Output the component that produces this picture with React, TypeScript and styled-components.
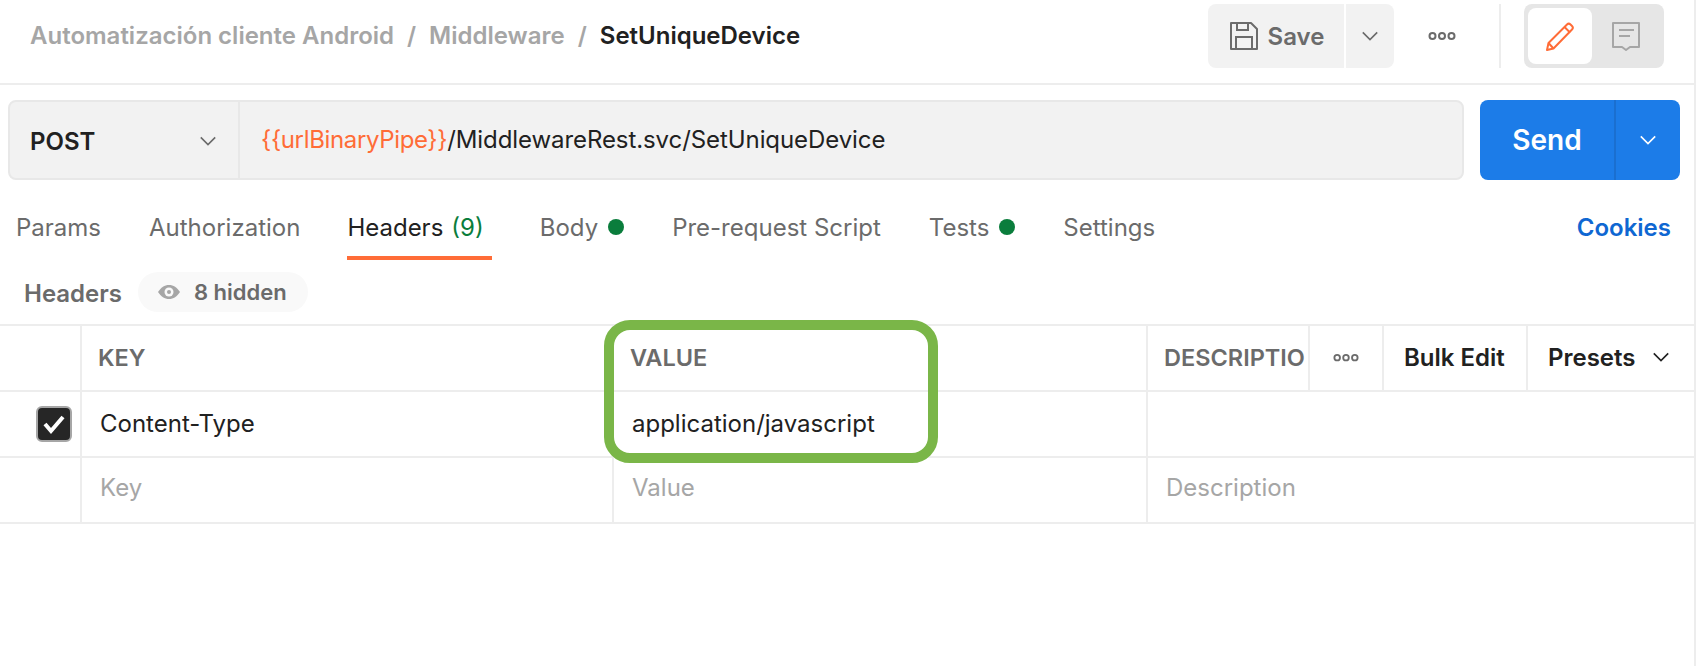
import React from "react";
import styled, { createGlobalStyle } from "styled-components";

const Global = createGlobalStyle`
  html, body { margin: 0; padding: 0; background: #fff; }
  body { font-family: Inter, "Noto Sans", "Liberation Sans", sans-serif; -webkit-font-smoothing: antialiased; overflow: hidden; }
  * { box-sizing: border-box; }
`;

const Page = styled.div`
  width: 1696px; height: 666px; background: #fff; border-right: 2px solid #ededed;
  position: relative; overflow: hidden; font-size: 24px; color: #212121;
`;
const TopBar = styled.header`
  height: 85px; border-bottom: 2px solid #ededed; display: flex; align-items: flex-start; padding: 4px 30px 0 30px;
`;
const Crumbs = styled.nav`
  flex: 1; height: 62px; display: flex; align-items: center; gap: 13px; font-weight: 600; font-size: 24px; color: #a6a6a6;
`;
const Current = styled.span` color: #212121; `;
const SaveBtn = styled.button`
  width: 136px; height: 64px; border: 0; background: #f2f2f2; border-radius: 8px 0 0 8px; display: flex; align-items: center; justify-content: center;
  gap: 10px; font: 600 24px Inter, sans-serif; color: #6b6b6b; padding: 0 0 0 2px;
`;
const SaveArrow = styled.button`
  width: 48px; height: 64px; margin-left: 2px; border: 0; background: #f2f2f2; border-radius: 0 8px 8px 0; display: flex; align-items: center; justify-content: center; padding: 0;
`;
const MoreBtn = styled.div`
  width: 96px; height: 64px; margin-right: 9px; display: flex; align-items: center; justify-content: center;
`;
const Divider = styled.div` width: 2px; height: 64px; background: #ededed; `;
const Toggle = styled.div`
  width: 140px; height: 64px; margin-left: 23px; background: #e6e6e6; border-radius: 8px; padding: 4px; display: flex;
`;
const ToggleOn = styled.div`
  width: 64px; height: 56px; background: #fff; border-radius: 8px; display: flex; align-items: center; justify-content: center;
`;
const ToggleOff = styled.div` flex: 1; display: flex; align-items: center; justify-content: center; `;

const UrlRow = styled.div`
  display: flex; padding: 15px 0 0 8px; height: 95px;
`;
const UrlBox = styled.div`
  width: 1456px; height: 80px; background: #f2f2f2; border: 2px solid #e8e8e8; border-radius: 8px; display: flex;
`;
const Method = styled.div`
  width: 230px; border-right: 2px solid #e8e8e8; display: flex; align-items: center; justify-content: space-between; padding: 2px 21px 0 20px;
  font-weight: 600; font-size: 24px; color: #212121;
`;
const Url = styled.div`
  flex: 1; display: flex; align-items: center; padding: 0 0 2px 21px; font-size: 24px; letter-spacing: -0.08px; color: #212121;
`;
const Var = styled.span` color: #ff6c37; letter-spacing: -0.35px; `;
const Send = styled.div`
  width: 200px; height: 80px; margin-left: 16px; background: #1c7ce8; border-radius: 8px; display: flex; color: #fff;
`;
const SendLabel = styled.div`
  width: 136px; border-right: 2px solid #1a6fd0; display: flex; align-items: center; justify-content: center; font-weight: 600; font-size: 28px;
`;
const SendArrow = styled.div` flex: 1; display: flex; align-items: center; justify-content: center; `;

const Tabs = styled.div`
  height: 80px; display: flex; align-items: flex-start; gap: 48px; padding: 0 23px 0 16px;
`;
const Tab = styled.div<{ $active?: boolean }>`
  height: 80px; display: flex; align-items: center; gap: 8px;
  padding: ${(p) => (p.$active ? "18px 8px 0 0" : "14px 0 0 0")};
  margin-left: ${(p) => (p.$active ? "-1px" : "0")};
  border-bottom: ${(p) => (p.$active ? "4px solid #ff6c37" : "0")};
  color: ${(p) => (p.$active ? "#212121" : "#6b6b6b")}; font-size: 24px;
`;
const Count = styled.span` color: #0a7d3c; `;
const Dot = styled.span` width: 16px; height: 16px; border-radius: 50%; background: #0a7d3c; margin-left: 2px; `;
const Cookies = styled.div`
  margin-left: auto; height: 80px; display: flex; align-items: center; padding-top: 14px; font-weight: 600; font-size: 24px; color: #0f67d2;
`;
const SubRow = styled.div`
  height: 64px; padding: 12px 0 0 24px; display: flex; align-items: flex-start; gap: 16px;
`;
const SubTitle = styled.div` height: 40px; display: flex; align-items: center; padding-top: 2px; font-weight: 600; font-size: 24px; color: #6b6b6b; `;
const Pill = styled.div`
  width: 170px; height: 40px; border-radius: 20px; background: #f9f9f9; display: flex; align-items: center; padding-left: 19px; gap: 13px;
  font-weight: 600; font-size: 22px; color: #6b6b6b;
`;

const Table = styled.div`
  display: grid; grid-template-columns: 82px 532px 534px 162px 74px 144px 1fr; grid-auto-rows: 66px; border-top: 2px solid #ededed;
`;
const Cell = styled.div<{ $span?: number; $noBorder?: boolean }>`
  border-bottom: 2px solid #ededed; border-right: ${(p) => (p.$noBorder ? "0" : "2px solid #ededed")};
  display: flex; align-items: center; padding-left: 16px; overflow: hidden; white-space: nowrap;
  ${(p) => p.$span && `grid-column: span ${p.$span};`}
`;
const HeadCell = styled(Cell)` padding-bottom: 2px; font-weight: 600; font-size: 23.5px; color: #6b6b6b; `;
const ActionCell = styled(Cell)` padding-bottom: 2px; font-weight: 600; font-size: 24px; color: #212121; padding-left: 20px; `;
const PresetCell = styled(Cell)` padding-bottom: 2px; font-weight: 600; font-size: 24px; color: #212121; padding-left: 20px; gap: 16px; `;
const DotsCell = styled(Cell)` padding-left: 0; justify-content: center; `;
const CheckCell = styled(Cell)` padding: 0; justify-content: flex-end; padding-right: 8px; `;
const Box = styled.div`
  width: 36px; height: 36px; background: #262626; border: 2px solid #a6a6a6; border-radius: 6px; display: flex; align-items: center; justify-content: center;
`;
const TextCell = styled(Cell)` padding: 0 0 2px 18px; font-size: 24px; color: #212121; `;
const PlaceCell = styled(Cell)` padding: 0 0 6px 18px; font-size: 24px; color: #a6a6a6; `;

const Highlight = styled.div`
  position: absolute; left: 604px; top: 320px; width: 334px; height: 143px; border: 10px solid #7ab648; border-radius: 26px; pointer-events: none;
`;

const Chevron = ({ color = "#6b6b6b", size = 20 }: { color?: string; size?: number }) => (
  <svg width={size} height={size} viewBox="0 0 20 20" fill="none">
    <path d="M2 6l8 8 8-8" stroke={color} strokeWidth="1.8" />
  </svg>
);
const Dots = ({ w = 28 }: { w?: number }) => (
  <svg width={w} height={(w * 10) / 28} viewBox="0 0 28 10" fill="none" stroke="#6b6b6b" strokeWidth="2">
    <circle cx="4.5" cy="5" r="3" /><circle cx="14" cy="5" r="3" /><circle cx="23.5" cy="5" r="3" />
  </svg>
);

export default function App() {
  return (
    <Page>
      <Global />
      <TopBar>
        <Crumbs>
          <span>Automatización cliente Android</span><span>/</span><span>Middleware</span><span>/</span><Current>SetUniqueDevice</Current>
        </Crumbs>
        <SaveBtn>
          <svg width="28" height="28" viewBox="0 0 28 28" fill="none" stroke="#6b6b6b" strokeWidth="2">
            <path d="M1 1h20l6 6v20H1z" strokeLinejoin="round" />
            <path d="M7 1v7h11V1M6 27V15h16v12" />
          </svg>
          Save
        </SaveBtn>
        <SaveArrow><Chevron size={18} /></SaveArrow>
        <MoreBtn><Dots /></MoreBtn>
        <Divider />
        <Toggle>
          <ToggleOn>
            <svg width="28" height="29" viewBox="0 0 28 29" fill="none" stroke="#ff6c37" strokeWidth="2">
              <path d="M1 28l1.500-7L21 2.500a2.500 2.500 0 0 1 3.500 0l1.500 1.500a2.500 2.500 0 0 1 0 3.500L7.500 26.500z" strokeLinejoin="round" />
              <path d="M2.500 21l5 5.500M18.500 5l5.500 5.500" />
            </svg>
          </ToggleOn>
          <ToggleOff>
            <svg width="28" height="29" viewBox="0 0 28 29" fill="none" stroke="#a6a6a6" strokeWidth="2">
              <path d="M1 1h26v24H18l-4 3-4-3H1z" strokeLinejoin="round" />
              <path d="M7 8h15M7 14h11" />
            </svg>
          </ToggleOff>
        </Toggle>
      </TopBar>
      <UrlRow>
        <UrlBox>
          <Method>POST<Chevron size={18} /></Method>
          <Url><Var>{"{{urlBinaryPipe}}"}</Var>/MiddlewareRest.svc/SetUniqueDevice</Url>
        </UrlBox>
        <Send>
          <SendLabel>Send</SendLabel>
          <SendArrow><Chevron color="#fff" size={18} /></SendArrow>
        </Send>
      </UrlRow>
      <Tabs>
        <Tab>Params</Tab>
        <Tab>Authorization</Tab>
        <Tab $active>Headers <Count>(9)</Count></Tab>
        <Tab>Body<Dot /></Tab>
        <Tab>Pre-request Script</Tab>
        <Tab>Tests<Dot /></Tab>
        <Tab>Settings</Tab>
        <Cookies>Cookies</Cookies>
      </Tabs>
      <SubRow>
        <SubTitle>Headers</SubTitle>
        <Pill>
          <svg width="24" height="16" viewBox="0 0 24 16" fill="none">
            <path d="M1 8c3-4.500 6.500-7 11-7s8 2.500 11 7c-3 4.500-6.500 7-11 7s-8-2.500-11-7z" fill="#a6a6a6" />
            <circle cx="12" cy="8" r="4.500" fill="#f9f9f9" />
            <circle cx="12" cy="8" r="2" fill="#a6a6a6" />
          </svg>
          8 hidden
        </Pill>
      </SubRow>
      <Table>
        <Cell />
        <HeadCell>KEY</HeadCell>
        <HeadCell>VALUE</HeadCell>
        <HeadCell>DESCRIPTIO</HeadCell>
        <DotsCell><Dots w={26} /></DotsCell>
        <ActionCell>Bulk Edit</ActionCell>
        <PresetCell $noBorder>Presets<Chevron color="#212121" size={18} /></PresetCell>

        <CheckCell>
          <Box>
            <svg width="24" height="22" viewBox="0 0 24 22" fill="none">
              <path d="M3 11l6 7L21 4" stroke="#fff" strokeWidth="4" />
            </svg>
          </Box>
        </CheckCell>
        <TextCell>Content-Type</TextCell>
        <TextCell>application/javascript</TextCell>
        <TextCell $span={4} $noBorder />

        <Cell />
        <PlaceCell>Key</PlaceCell>
        <PlaceCell>Value</PlaceCell>
        <PlaceCell $span={4} $noBorder>Description</PlaceCell>
      </Table>
      <Highlight />
    </Page>
  );
}
